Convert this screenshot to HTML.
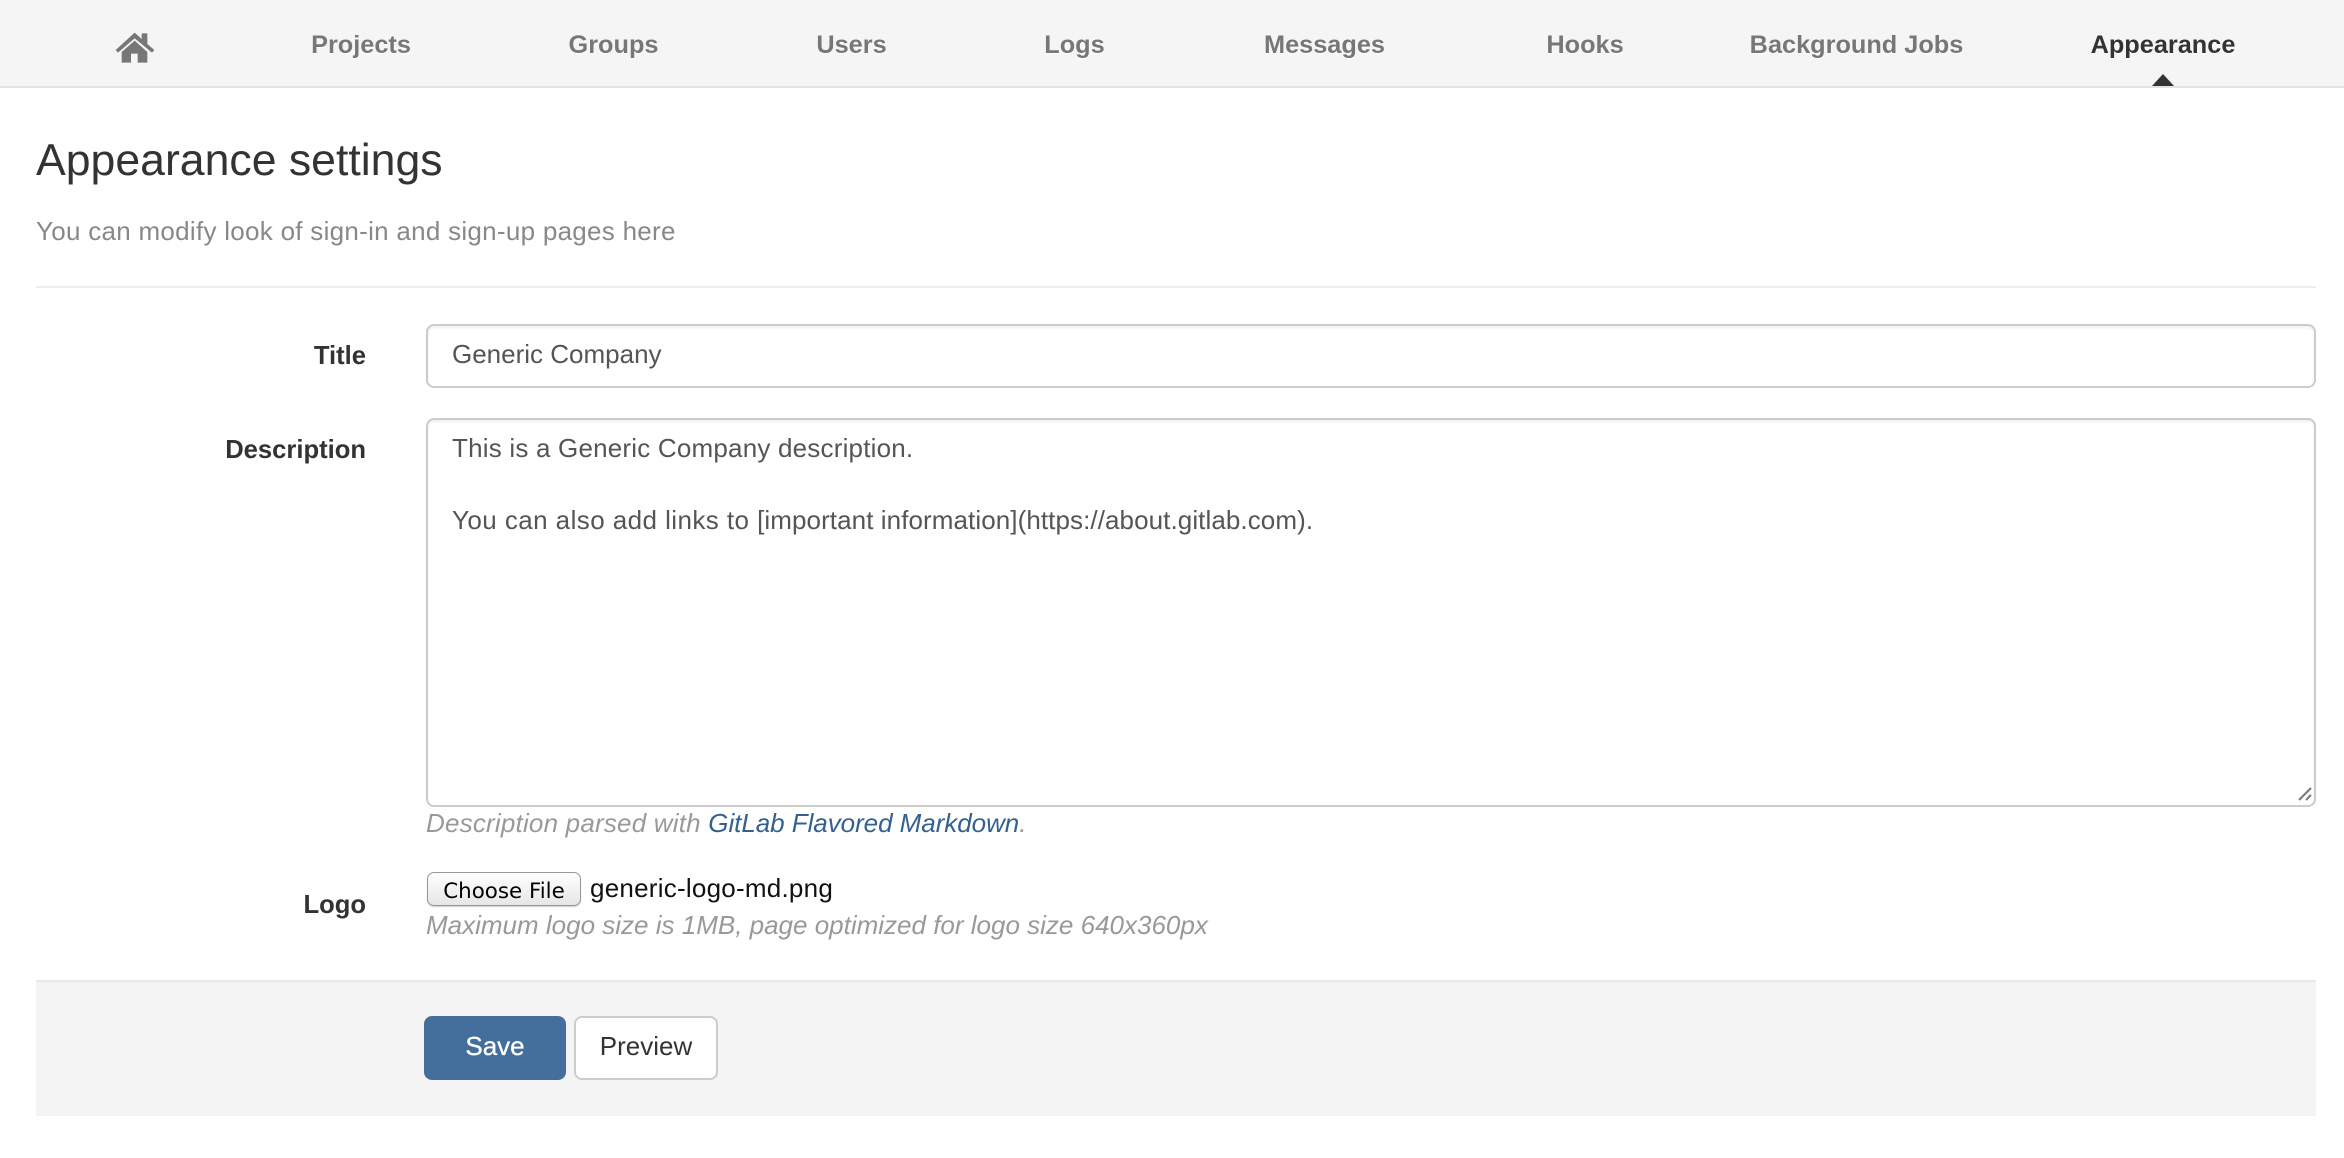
<!DOCTYPE html>
<html>
<head>
<meta charset="utf-8">
<style>
html,body{margin:0;padding:0;background:#fff;width:2344px;height:1158px;overflow:hidden;font-family:"Liberation Sans",Arial,sans-serif;color:#333}
.a{position:absolute;white-space:nowrap;line-height:30px}
.nav{position:absolute;left:0;top:0;width:2344px;height:86px;background:#f5f5f5;border-bottom:2px solid #e3e3e3}
.n{position:absolute;top:30px;font-size:25.3px;font-weight:bold;color:#777;line-height:30px;text-shadow:0 1px 1px #fff;transform:translateX(-50%);white-space:nowrap}
.box{position:absolute;box-sizing:border-box;background:#fff;border:2px solid #ccc;border-radius:8px;box-shadow:inset 0 2px 2px rgba(0,0,0,.06)}
.lab{position:absolute;right:1978px;font-size:25.6px;font-weight:bold;color:#333;line-height:30px;white-space:nowrap}
.t{position:absolute;left:452px;font-size:26px;color:#555;line-height:30px;white-space:nowrap;letter-spacing:.2px}
.h{position:absolute;left:426px;font-size:26px;font-style:italic;color:#999;line-height:30px;white-space:nowrap}
</style>
</head>
<body>
<div class="nav">
<svg style="position:absolute;left:100px;top:20px" width="70" height="50" viewBox="0 0 210 150"><path d="M104 38 L125 57 V40 H142 V72 L163 90 L156 98 L104 55 L54 98 L47 90 Z" fill="#777"/><path d="M104 62 L142 96 V128 H113 V101 H93 V128 H65 V96 Z" fill="#777"/></svg>
<div class="n" style="left:361px">Projects</div>
<div class="n" style="left:613.500px">Groups</div>
<div class="n" style="left:851.500px">Users</div>
<div class="n" style="left:1074.500px">Logs</div>
<div class="n" style="left:1324.500px">Messages</div>
<div class="n" style="left:1585px">Hooks</div>
<div class="n" style="left:1856.500px">Background Jobs</div>
<div class="n" style="left:2163px;color:#333">Appearance</div>
<div style="position:absolute;left:2152px;top:74px;width:0;height:0;border-left:11px solid transparent;border-right:11px solid transparent;border-bottom:12px solid #333"></div>
</div>

<div class="a" style="left:36px;top:136px;font-size:44.6px;line-height:50px;color:#333">Appearance settings</div>
<div class="a" style="left:36px;top:216px;font-size:26px;color:#888;letter-spacing:.28px">You can modify look of sign-in and sign-up pages here</div>
<div style="position:absolute;left:36px;top:286px;width:2280px;height:2px;background:#eee"></div>

<div class="lab" style="top:341px">Title</div>
<div class="box" style="left:426px;top:324px;width:1890px;height:64px"></div>
<div class="t" style="top:339px;letter-spacing:0">Generic Company</div>

<div class="lab" style="top:435px">Description</div>
<div class="box" style="left:426px;top:418px;width:1890px;height:389px"></div>
<div class="t" style="top:433px">This is a Generic Company description.</div>
<div class="t" style="top:505px"><span style="letter-spacing:.43px">You can also add links to </span><span style="letter-spacing:.08px">[important information](https://about.gitlab.com).</span></div>
<svg style="position:absolute;left:2298px;top:787px" width="16" height="16" viewBox="0 0 16 16"><path d="M1 13 L13 1 M8 13 L13 8" stroke="#777" stroke-width="2" fill="none"/></svg>

<div class="h" style="top:808px"><span style="letter-spacing:.2px">Description parsed with </span><span style="color:#35618f;letter-spacing:-.05px">GitLab Flavored Markdown</span>.</div>

<div class="lab" style="top:890px">Logo</div>
<div style="position:absolute;box-sizing:border-box;left:427px;top:872px;width:154px;height:34px;border:1px solid #999;border-radius:7px;background:linear-gradient(#fff,#f0f0f0 60%,#e6e6e6);box-shadow:0 1px 1px rgba(0,0,0,.2);text-align:center;font-family:'DejaVu Sans',sans-serif;font-size:21.4px;line-height:37px;color:#000">Choose File</div>
<div class="a" style="left:590px;top:873px;font-size:26px;color:#111;letter-spacing:.24px">generic-logo-md.png</div>
<div class="h" style="top:910px">Maximum logo size is 1MB, page optimized for logo size 640x360px</div>

<div style="position:absolute;box-sizing:border-box;left:36px;top:980px;width:2280px;height:136px;background:#f4f4f4;border-top:2px solid #e8e8e8"></div>
<div style="position:absolute;left:424px;top:1016px;width:142px;height:64px;background:#446e9b;border-radius:8px;color:#fff;font-size:26px;line-height:60px;text-align:center;-webkit-text-stroke:.3px #fff">Save</div>
<div style="position:absolute;box-sizing:border-box;left:574px;top:1016px;width:144px;height:64px;background:#fff;border:2px solid #ccc;border-radius:8px;color:#333;font-size:26px;line-height:56px;text-align:center">Preview</div>
</body>
</html>
